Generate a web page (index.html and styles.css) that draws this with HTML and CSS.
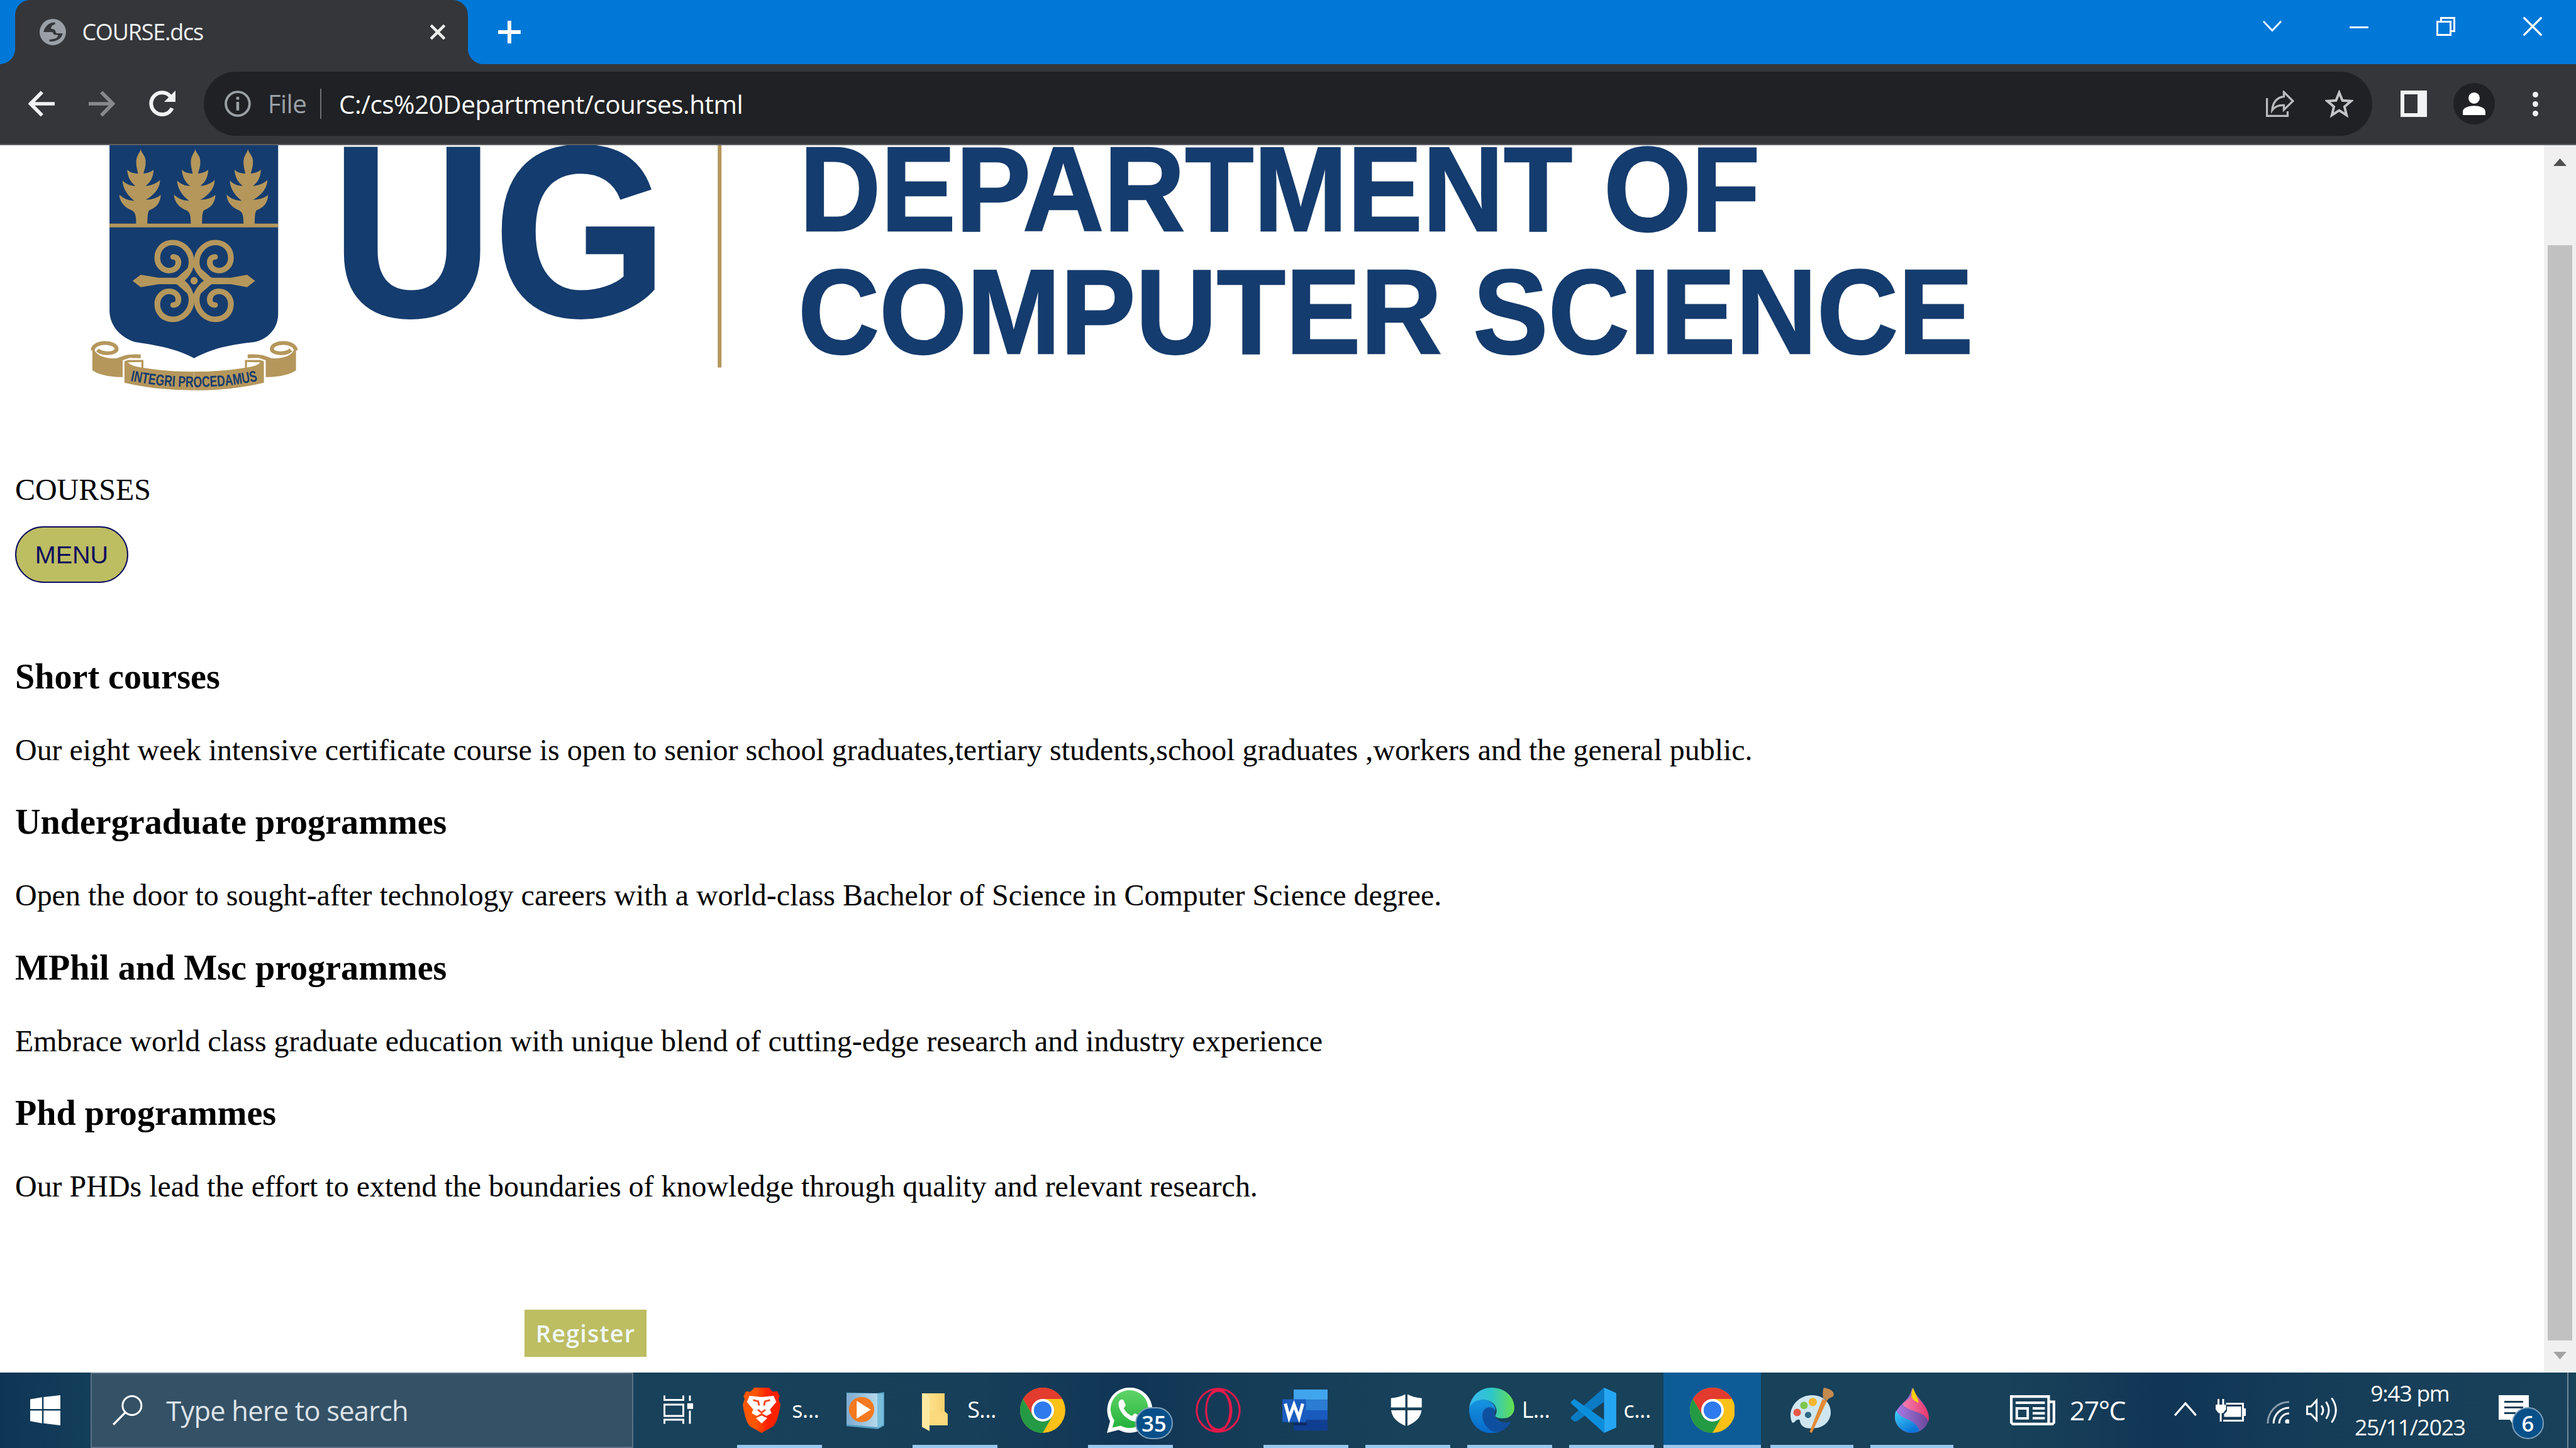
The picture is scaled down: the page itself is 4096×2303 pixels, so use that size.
FILE: index.html
```
<!DOCTYPE html>
<html lang="en">
<head>
<meta charset="utf-8">
<title>COURSE.dcs</title>
<link rel="stylesheet" href="styles.css">
</head>
<body>
<svg class="defs" aria-hidden="true">
  <defs>
    <linearGradient id="brave" x1="0" x2="1"><stop offset=".35" stop-color="#ff5601"/><stop offset=".65" stop-color="#ff2200"/></linearGradient>
    <linearGradient id="wa" x1="0" y1="0" x2="0" y2="1"><stop offset="0" stop-color="#5fd468"/><stop offset="1" stop-color="#25b23c"/></linearGradient>
    <linearGradient id="edgeTop" x1="0" x2="1"><stop offset="0" stop-color="#36b8f4"/><stop offset=".5" stop-color="#2fc6c8"/><stop offset="1" stop-color="#66e04f"/></linearGradient>
    <linearGradient id="edgeSide" x1="0" y1="0" x2="0" y2="1"><stop offset="0" stop-color="#1795e0"/><stop offset="1" stop-color="#0669cb"/></linearGradient>
    <linearGradient id="folder" x1="0" x2="1"><stop offset="0" stop-color="#ffe79a"/><stop offset="1" stop-color="#f6cf67"/></linearGradient>
    <linearGradient id="drop" x1="0" y1="0" x2=".6" y2="1"><stop offset="0" stop-color="#40d4f8"/><stop offset="1" stop-color="#0a74d8"/></linearGradient>
    <linearGradient id="dropMid" x1="0" x2="1"><stop offset="0" stop-color="#a87ce8"/><stop offset="1" stop-color="#6a479a"/></linearGradient>
    <linearGradient id="dropTop" x1="0" x2="1"><stop offset="0" stop-color="#f080b0"/><stop offset="1" stop-color="#e8386c"/></linearGradient>
    <linearGradient id="media" x1="0" x2="1"><stop offset="0" stop-color="#7fabd0"/><stop offset="1" stop-color="#b4d9ec"/></linearGradient>
    <symbol id="chrome" viewBox="0 0 24 24">
      <circle cx="12" cy="12" r="12" fill="#fbc116"/>
      <path d="M12 12 6.8 15 1.6 6A12 12 0 0 1 22.4 6H12Z" fill="#e33b2e"/>
      <path d="M1.6 6A12 12 0 0 0 12 24L17.2 15 12 12 6.8 15Z" fill="#249a44"/>
      <circle cx="12" cy="12" r="6" fill="#fff"/><circle cx="12" cy="12" r="4.7" fill="#2f7bee"/>
    </symbol>
    <path id="leafstalk" d="M-4 72C-4 95-28 110-28 150C-28 180-20 200-18 218C-45 218-65 210-78 195C-76 235-60 270-32 290C-65 290-90 275-104 258C-103 310-70 350-38 378C-75 375-105 360-122 340C-120 390-85 420-55 432C-35 442-28 455-28 515L34 515C34 455 38 440 45 432C80 420 108 390 108 342C90 362 55 370 25 372C60 350 105 310 104 255C85 275 55 288 25 290C50 270 68 240 68 195C55 210 35 215 12 218C18 190 26 180 24 140C22 110-2 95-4 72Z"/>
    <path id="curl" fill="none" stroke-width="32" stroke-linecap="round" d="M610 846H690C745 838 782 790 782 735C780 668 730 622 678 622C625 622 592 662 592 712C592 755 622 786 658 786C690 786 709 764 709 738C709 718 698 706 680 706"/>
    <g id="scroll">
      <path d="M232 1240V1370C260 1395 330 1412 400 1410V1312L440 1298 500 1300V1278C440 1272 400 1284 370 1300C310 1304 250 1288 240 1240Z"/>
      <path fill="none" stroke-width="22" d="M260 1252C290 1280 368 1274 366 1244C362 1200 236 1196 234 1254"/>
      <path fill-rule="evenodd" d="M410 1318 430 1310H515V1356Q660 1380 796 1378V1488Q590 1488 410 1443ZM430 1324C445 1345 480 1350 504 1354V1322Z"/>
    </g>
  </defs>
</svg>

<header class="tabstrip">
  <div class="tab">
    <svg class="s14" viewBox="0 0 14 14"><circle cx="7" cy="7" r="7" fill="#9aa0a6"/><path d="M8.200 1.800C5.500 1.800 3 3.200 2 7H6.800L7.600 8.300 9.800 8.600C9.600 10 8.600 10.800 5.200 10.900V12C9 12.300 11.800 10.400 12.200 7.700H9.200C8.400 7.600 8.600 5.800 7.600 5.600L6 5.200C6.200 3.600 7 3.300 8.200 2.800Z" fill="#35363a"/></svg>
    <span class="tab-title">COURSE.dcs</span>
    <svg class="s8 tab-close" viewBox="0 0 8 8"><path d="M.4.4 7.6 7.6M7.6.4.4 7.6" stroke="#eee" stroke-width="1.5"/></svg>
  </div>
  <svg class="s12 new-tab" viewBox="0 0 12 12"><path d="M6 0V12M0 6H12" stroke="#fff" stroke-width="2"/></svg>
  <div class="win-controls">
    <span><svg class="s10" viewBox="0 0 10 10"><path d="M.3 2.3 5 7.2 9.7 2.3" fill="none" stroke="#e6f2fc"/></svg></span>
    <span><svg class="s10" viewBox="0 0 10 10"><path d="M0 5.5H10" stroke="#fff"/></svg></span>
    <span><svg class="s10" viewBox="0 0 10 10"><path d="M.5 2.5H7.5V9.5H.5ZM2.5 2.5V.5H9.5V7.5H7.5" fill="none" stroke="#fff"/></svg></span>
    <span><svg class="s10" viewBox="0 0 10 10"><path d="M.2.2 9.8 9.8M9.8.2.2 9.8" stroke="#fff" stroke-width="1.1"/></svg></span>
  </div>
</header>

<nav class="toolbar">
  <span class="tool"><svg class="s14" viewBox="0 0 14 14"><path d="M14 7H1.5M7.3.8 1.2 7 7.3 13.2" fill="none" stroke="#f1f3f4" stroke-width="1.9"/></svg></span>
  <span class="tool"><svg class="s14" viewBox="0 0 14 14"><path d="M0 7H12.5M6.7.8 12.8 7 6.7 13.2" fill="none" stroke="#88898c" stroke-width="1.9"/></svg></span>
  <span class="tool"><svg class="s14" viewBox="0 0 14 14"><path d="M12.2 9.3A5.8 5.8 0 1 1 11.4 3.2" fill="none" stroke="#f1f3f4" stroke-width="2"/><path d="M14 0V6H8Z" fill="#f1f3f4"/></svg></span>
  <div class="omnibox">
    <svg class="s14" viewBox="0 0 14 14"><circle cx="7" cy="7" r="6.3" fill="none" stroke="#9aa0a6" stroke-width="1.3"/><path d="M7 6V10.6M7 3.3V4.8" stroke="#9aa0a6" stroke-width="1.5"/></svg>
    <span class="scheme">File</span>
    <span class="url">C:/cs%20Department/courses.html</span>
    <svg class="share" viewBox="0 0 15 14"><path d="M.5 4V13.5H11.5V11M9.5 3.2V.8L14.3 5.6 9.5 10.2V7.8C6.5 7.6 4.6 8.6 3.3 10.4 3.6 6.6 5.6 3.6 9.5 3.2Z" fill="none" stroke="#b9bbbd" stroke-width="1.1"/></svg>
    <svg class="star" viewBox="0 0 15 15"><path d="M7.5 1.4 9.2 5.6 13.8 5.9 10.3 8.9 11.4 13.4 7.5 10.9 3.6 13.4 4.7 8.9 1.2 5.9 5.8 5.6Z" fill="none" stroke="#c3c5c7" stroke-width="1.3"/></svg>
  </div>
  <svg class="s14 panel" viewBox="0 0 14 14"><path d="M0 0H14V14H0ZM2 2V12H9V2Z" fill="#f1f3f4" fill-rule="evenodd"/></svg>
  <svg class="avatar" viewBox="0 0 22 22"><circle cx="11" cy="11" r="11" fill="#202124"/><circle cx="11" cy="8" r="3" fill="#fff"/><path d="M5 17V15.2C5 13 8.4 12.1 11 12.1S17 13 17 15.2V17Z" fill="#fff"/></svg>
  <svg class="dots" viewBox="0 0 3 13"><g fill="#f1f3f4"><circle cx="1.5" cy="1.5" r="1.5"/><circle cx="1.5" cy="6.5" r="1.5"/><circle cx="1.5" cy="11.5" r="1.5"/></g></svg>
</nav>

<div class="viewport">
  <main class="page">
    <svg class="banner" viewBox="0 77 1100 140">
      <g transform="translate(26.78 72.31) scale(.09565 .09053)">
        <path fill="#153c6e" d="M327 40H1262V1040C1262 1130 1200 1190 1130 1205C1000 1220 900 1240 796 1300C690 1240 590 1225 470 1205C390 1180 327 1110 327 1020Z"/>
        <g fill="#b5975c">
          <use href="#leafstalk" x="503"/><use href="#leafstalk" x="806"/><use href="#leafstalk" x="1098"/>
          <rect x="327" y="511" width="935" height="22"/>
          <path d="M455 847 500 811 600 828H700L796 740 892 828H1000L1090 811 1134 847 1090 883 1000 866H892L796 954 700 866H600L500 883Z"/>
        </g>
        <g stroke="#b5975c">
          <use href="#curl"/>
          <use href="#curl" transform="translate(1592 0) scale(-1 1)"/>
          <use href="#curl" transform="translate(0 1694) scale(1 -1)"/>
          <use href="#curl" transform="translate(1592 1694) scale(-1 -1)"/>
        </g>
        <path fill="#153c6e" d="M744 845Q778 815 793 766Q812 815 850 845Q812 875 793 924Q778 875 744 845Z"/>
        <ellipse cx="796" cy="846" rx="20" ry="22" fill="#b5975c"/>
        <g fill="#b5975c" stroke="#b5975c" stroke-width="0">
          <use href="#scroll"/>
          <use href="#scroll" transform="translate(1593 0) scale(-1 1)"/>
        </g>
        <path id="motto" fill="none" d="M442 1432Q796 1506 1155 1432"/>
        <text class="motto" fill="#153c6e" font-size="90"><textPath href="#motto" textLength="712" lengthAdjust="spacingAndGlyphs">INTEGRI PROCEDAMUS</textPath></text>
      </g>
      <g class="wordmark" fill="#153c6e" stroke="#153c6e">
        <text x="175.6" y="167.7" font-size="130" stroke-width=".8" textLength="178.5" lengthAdjust="spacingAndGlyphs">UG</text>
        <text x="424" y="122.3" font-size="64" stroke-width=".8" textLength="509.3" lengthAdjust="spacingAndGlyphs">DEPARTMENT OF</text>
        <text x="423.2" y="187.4" font-size="64" stroke-width=".8" textLength="623.2" lengthAdjust="spacingAndGlyphs">COMPUTER SCIENCE</text>
      </g>
      <rect x="380.6" y="77" width="2" height="117.9" fill="#b5975c"/>
    </svg>
    <p class="label">COURSES</p>
    <button class="menu">MENU</button>
    <section class="courses">
      <h3>Short courses</h3>
      <p>Our eight week intensive certificate course is open to senior school graduates,tertiary students,school graduates ,workers and the general public.</p>
      <h3>Undergraduate programmes</h3>
      <p>Open the door to sought-after technology careers with a world-class Bachelor of Science in Computer Science degree.</p>
      <h3>MPhil and Msc programmes</h3>
      <p>Embrace world class graduate education with unique blend of cutting-edge research and industry experience</p>
      <h3>Phd programmes</h3>
      <p>Our PHDs lead the effort to extend the boundaries of knowledge through quality and relevant research.</p>
    </section>
    <button class="register">Register</button>
  </main>
  <aside class="scrollbar">
    <svg class="arrow" viewBox="0 0 7 4"><path d="M3.5 0 7 4H0Z" fill="#505050"/></svg>
    <div class="thumb"></div>
    <svg class="arrow" viewBox="0 0 7 4"><path d="M0 0H7L3.5 4Z" fill="#a3a3a3"/></svg>
  </aside>
</div>

<footer class="taskbar">
  <div class="start"><svg class="s16" viewBox="0 0 16 16"><path d="M0 2.2 6.3 1.1V7.3H0ZM7.1 1 16 0V7.3H7.1ZM0 8.2H6.3V14.9L0 13.8ZM7.1 8.2H16V16L7.1 14.9Z" fill="#fff"/></svg></div>
  <div class="search">
    <svg class="s16" viewBox="0 0 16 16"><circle cx="10.3" cy="5.5" r="5" fill="none" stroke="#fff"/><path d="M6.7 9.2.4 15.6" stroke="#fff" stroke-width="1.1"/></svg>
    <span>Type here to search</span>
  </div>
  <div class="taskview"><svg class="s16" viewBox="0 0 16 16"><path d="M.5.2V2.5H10.5V.2M.5 5H10.5V11H.5ZM.5 15.2V13H10.5V15.2M14 .2V3M14 8.2V15.2" fill="none" stroke="#fff"/><path d="M12.6 4.3H15.7V7.3H12.6Z" fill="#fff"/></svg></div>
  <div class="task open brave">
    <svg class="brave-icon" viewBox="0 0 20 24"><path d="M6 0H14L15.8 2.2 18.3 2 19.6 4.5 19 6 20 9C19 15 18 18.5 16.2 20.5L10 24 3.8 20.5C2 18.5 1 15 0 9L1 6 .4 4.5 1.7 2 4.2 2.2Z" fill="url(#brave)"/><path d="M3.6 4.3 10 5 16.4 4.3 17.8 7.6 14.5 11.5 15.2 13.6 12.6 15 10 13.6 7.4 15 4.8 13.6 5.5 11.5 2.2 7.6ZM7 16.2 10 14.8 13 16.2 10 19Z" fill="#fff"/><path d="M5.5 6.6 8.2 7.3 8.7 9.5M14.5 6.6 11.8 7.3 11.3 9.5M8 11.7 10 13.2 12 11.7" fill="none" stroke="#ff4a20"/></svg>
    <span>s...</span>
  </div>
  <div class="task media"><svg class="s20" viewBox="0 0 20 20"><path d="M16 1 20 .3V18.2L16.6 20 0 18.4V.6Z" fill="#4f9cc0"/><path d="M0 1H16.5V19L0 17.6Z" fill="url(#media)"/><path d="M16.5 1.2H19.6V17.8L16.5 19.4Z" fill="#78bddb"/><circle cx="8" cy="9.6" r="6.7" fill="#f37a20"/><path d="M5.4 5 12.8 9.7 5.4 14.4Z" fill="#fff"/></svg></div>
  <div class="task open files"><svg class="folder-icon" viewBox="0 0 14 20"><path d="M0 0H12V9.5L13.6 11V17H4V20L0 17.8Z" fill="url(#folder)"/><path d="M0 .3C3 .6 4 2 4 4V20L0 17.8Z" fill="#ffe9a2"/><path d="M4 9V17H13.6V11L12 9.8Z" fill="#fada7c"/></svg><span>S...</span></div>
  <div class="task chrome"><svg class="s24"><use href="#chrome"/></svg></div>
  <div class="task open whatsapp"><svg class="s24" viewBox="0 0 24 24"><path d="M0 24 1.7 17.8A12 12 0 1 1 6.3 22.4Z" fill="#fff"/><path d="M2.9 21.2 4 17.4A10 10 0 1 1 7.3 20.2Z" fill="url(#wa)"/><path d="M6.2 8C6.7 6 8.5 5.8 9 7L10 9.4 8.9 11C10 13 11.5 14.3 13.3 15L14.8 13.6 18 15.3C17.5 18 15.4 18.4 13.8 17.8 9.3 16.2 6 12 6.2 8Z" fill="#fff"/></svg><b class="badge">35</b></div>
  <div class="task opera"><svg class="s24" viewBox="0 0 24 24"><g fill="none" stroke="#e6194b"><circle cx="12" cy="12" r="11.4"/><ellipse cx="12" cy="12" rx="6.4" ry="11"/><path d="M7.5 4.5C12-1.5 19 3 19 12S12 25.500 7.5 19.500"/></g></svg></div>
  <div class="task open word"><svg class="word-icon" viewBox="0 0 24 22"><path d="M6 0H24V5.500H6Z" fill="#41a5ee"/><path d="M6 5.500H24V11H6Z" fill="#2b7cd3"/><path d="M6 11H24V16.200H6Z" fill="#185abd"/><path d="M6 16.200H24V21.800H6Z" fill="#103f91"/><path d="M6 17.500H13V19H6Z" fill="#0b2a63"/><path d="M0 5.200H12.500V17.300H0Z" fill="#1a5cbe"/><path d="M1.600 7.500 3.600 15 6.200 8 8.800 15 10.800 7.500" fill="none" stroke="#fff" stroke-width="1.700"/></svg></div>
  <div class="task open shield"><svg class="shield-icon" viewBox="0 0 18 18"><path d="M8.400.300V7.500H.600V2.400C3.500 2.300 6 1.500 8.400.300ZM9.600.300C12 1.500 14.500 2.300 17.400 2.400V7.500H9.600ZM.700 9H8.400V17.500C3.500 15.200 1.300 13 .700 9ZM9.600 9H17.300C16.700 13 14.500 15.200 9.600 17.500Z" fill="#fff"/></svg></div>
  <div class="task open edge"><svg class="s24" viewBox="0 0 24 24"><path d="M0 11C1 4 6 0 12 0 19 0 24 5 24 10.500 24 14 21.500 16.300 18 16.300 15 16.300 13.500 15.500 14 14.500 16 11.500 13 6.500 8 6.500 4 6.500 1 8.500 0 11Z" fill="url(#edgeTop)"/><path d="M0 11.500C.500 8 4 6.200 8 6.400 12 6.600 14.500 10 13.800 12.500 13 10 9 9.500 7.500 13 6 18 10 23 16.500 23.200 8 26.500 0 20.500 0 11.500Z" fill="url(#edgeSide)"/><path d="M7.300 13C8.500 9.500 12.500 10 13.700 12.300 12.500 17 18 19.500 22 18 21 21 17.500 23.800 14 23.500 9.500 22.500 6.300 18 7.300 13Z" fill="#0f4fa0"/></svg><span>L...</span></div>
  <div class="task open code"><svg class="s24" viewBox="0 0 24 24"><path d="M17.500 0V7.500L3.300 17.800 1.800 18 0 16.600V15.500Z" fill="#0a7bc4"/><path d="M1.800 6 17.500 17V24L0 8.300V7.400Z" fill="#0b8fdc"/><path d="M17.500 0 24 2.800V21.200L17.500 24Z" fill="#25a6f2"/></svg><span>c...</span></div>
  <div class="task active"><svg class="s24"><use href="#chrome"/></svg></div>
  <div class="task open paint"><svg class="s24" viewBox="0 0 24 24"><path d="M12 4C18 4 22 8 22 13S18 21.500 13 21.500C8 22 6 20.500 5.500 17 3 16.500 3.500 19 1.500 18.500-1.500 12 4 4 12 4Z" fill="#cfe6f1"/><circle cx="12.500" cy="7.600" r="2.200" fill="#f5b52c"/><circle cx="7.800" cy="9.400" r="2" fill="#7cc64c"/><circle cx="4.200" cy="13.200" r="2" fill="#e85743"/><circle cx="10" cy="14.500" r="1.700" fill="#2c6684"/><path d="M17.600 6 20 7 12 24 10.800 23.500Z" fill="#e28a35"/><path d="M18 5.500C17.500 3 18 1 18.300 0 21.500.500 24 2 23.600 4 23 5.500 21 5 20 7Z" fill="#c48a4e"/></svg></div>
  <div class="task open drop"><svg class="drop-icon" viewBox="0 0 18 24"><path d="M9 0C11 5 18 9 18 16A9 8.500 0 0 1 9 24A9 8.500 0 0 1 0 16C0 9 8 8 9 0Z" fill="url(#dropMid)"/><path d="M.600 12C3 17.500 11 16 13 23A9 8.500 0 0 1 0 16C0 14.500.200 13 .600 12Z" fill="url(#drop)"/><path d="M4 8.500C6 13 16 12 17.800 18 19 11 13 7 9.500 2 9 5 6 7 4 8.500Z" fill="url(#dropTop)"/><path d="M9.700 0C10.500 3 12.500 5 12.500 8 9.500 7 7.500 4.500 9.700 0Z" fill="#fccc10"/></svg></div>

  <div class="tray">
    <svg class="news" viewBox="0 0 24 16"><path d="M.700.700H20.500V15.300H1.500L.700 14.500ZM20.500 3.500H23.300V14.500L22.500 15.300H20.500" fill="none" stroke="#fff" stroke-width="1.400"/><path d="M3 4H18.500M12 7H18.500M12 9.600H18.500M12 12.200H18.500" stroke="#fff" stroke-width="1.300"/><path d="M3.600 7H9.400V12.300H3.600Z" fill="none" stroke="#fff" stroke-width="1.300"/></svg>
    <span class="temp">27°C</span>
    <svg class="chev" viewBox="0 0 12 8"><path d="M.400 7.400 6 1 11.600 7.400" fill="none" stroke="#fff" stroke-width="1.100"/></svg>
    <svg class="battery" viewBox="0 0 16 12"><path d="M4 11.500H14.500V2.500H5.500M15.500 5V9" fill="none" stroke="#fff"/><path d="M6 4H13.500V9.500H4.500V8L6 6.500Z" fill="#fff"/><path d="M1.500 0V3M4 0V3M2.700 7V12" stroke="#fff"/><path d="M0 3H5.500V5.500L4 7.500H1.500L0 5.500Z" fill="#fff"/></svg>
    <svg class="wifi" viewBox="0 0 12 12"><circle cx="11" cy="11" r="1.200" fill="#fff"/><g fill="none" stroke="#fff"><path d="M6.700 12A5.300 5.300 0 0 1 12 6.700M3.700 12A8.300 8.300 0 0 1 12 3.700"/><path d="M.600 12A11.400 11.400 0 0 1 12 .600" opacity=".5"/></g></svg>
    <svg class="volume" viewBox="0 0 17 14"><path d="M.500 5H2.500L5.500 1.800V12.200L2.500 9H.500Z" fill="none" stroke="#fff"/><path d="M8 4.500Q10 7 8 9.500M10.500 2.500Q13.500 7 10.500 11.500M13.500.500Q18 7 13.500 13.500" fill="none" stroke="#fff"/></svg>
    <div class="clock"><span>9:43 pm</span><span class="date">25/11/2023</span></div>
    <div class="notify"><svg class="s16" viewBox="0 0 16 16"><path d="M0 0H16V13H10L7.500 15.500 6 13H0Z" fill="#fff"/><path d="M3 3.500H13M3 6.500H13M3 9.500H9" stroke="#183f59"/></svg><b class="badge">6</b></div>
  </div>
</footer>
</body>
</html>
```
FILE: styles.css
```
/* 1rem = 10 units of the 1366 x 768 desktop */
html { font-size: 29.985px; }
* { box-sizing: border-box; }
body {
  margin: 0;
  width: 100vw;
  height: 100vh;
  overflow: hidden;
  display: grid;
  grid-template-rows: 3.4rem 4.3rem 65.1rem 1fr;
  background: #fff;
  font-family: "Open Sans", "Noto Sans", sans-serif;
}
svg { display: block; flex: none; }
.defs { position: absolute; width: 0; height: 0; }
.s8 { width: .8rem; height: .8rem; }
.s10 { width: 1rem; height: 1rem; }
.s12 { width: 1.2rem; height: 1.2rem; }
.s14 { width: 1.4rem; height: 1.4rem; }
.s16 { width: 1.6rem; height: 1.6rem; }
.s20 { width: 2rem; height: 2rem; }
.s24 { width: 2.4rem; height: 2.4rem; }

/* tab strip */
.tabstrip { display: flex; background: #0078d8; }
.tab {
  position: relative;
  width: 24rem;
  margin-left: .8rem;
  padding: 0 1.2rem 0 1.3rem;
  display: flex;
  align-items: center;
  background: #35363a;
  border-radius: .8rem .8rem 0 0;
}
.tab::before, .tab::after {
  content: "";
  position: absolute;
  bottom: 0;
  width: .8rem;
  height: .8rem;
}
.tab::before { left: -.8rem; background: radial-gradient(circle at 0 0, transparent .79rem, #35363a .8rem); }
.tab::after { right: -.8rem; background: radial-gradient(circle at 100% 0, transparent .79rem, #35363a .8rem); }
.tab-title { margin-left: .85rem; font-size: 1.2rem; letter-spacing: -.04rem; line-height: 1.6rem; color: #f1f3f4; }
.tab-close { margin-left: auto; }
.new-tab { margin: 1.1rem 0 0 1.6rem; }
.win-controls { margin-left: auto; display: flex; height: 2.8rem; }
.win-controls span { width: 4.6rem; display: flex; align-items: center; justify-content: center; }

/* toolbar */
.toolbar {
  display: flex;
  align-items: center;
  padding-left: .6rem;
  background: #35363a;
  border-bottom: .1rem solid #5f6064;
}
.tool { width: 3.2rem; display: flex; justify-content: center; }
.omnibox {
  width: 115rem;
  height: 3.4rem;
  margin-left: .6rem;
  padding: 0 1rem 0 1.1rem;
  display: flex;
  align-items: center;
  border-radius: 1.7rem;
  background: #202124;
  font-size: 1.35rem;
}
.scheme {
  width: 2.85rem;
  margin-left: .9rem;
  line-height: 1.6rem;
  letter-spacing: -.02rem;
  color: #9aa0a6;
  border-right: .1rem solid #6b6e72;
}
.url { margin-left: .93rem; letter-spacing: -.017rem; color: #fff; }
.share { width: 1.5rem; height: 1.4rem; margin-left: auto; }
.star { width: 1.5rem; height: 1.5rem; margin-left: 1.65rem; }
.panel { margin-left: 1.5rem; }
.avatar { width: 2.2rem; height: 2.2rem; margin-left: 1.4rem; }
.dots { width: .3rem; height: 1.3rem; margin-left: 2rem; }

/* page */
.viewport { display: flex; min-height: 0; background: #fff; }
.page {
  flex: 1;
  display: flex;
  flex-direction: column;
  align-items: flex-start;
  font: 1.6rem/1.8rem "Liberation Serif", "Times New Roman", serif;
  color: #000;
}
.banner { width: 110rem; height: 14rem; }
.wordmark, .motto { font-family: "Liberation Sans", Arial, sans-serif; font-weight: 700; }
.label { margin: 3.39rem 0 0 .8rem; }
.menu {
  width: 6rem;
  height: 3rem;
  margin: 1.04rem 0 0 .8rem;
  padding: 0;
  border: .1rem solid #0b0b5e;
  border-radius: 1.5rem;
  background: #bdbd62;
  color: #0b0b5e;
  font: 1.32rem "Liberation Sans", Arial, sans-serif;
}
.courses { margin: 3.89rem 0 0 .8rem; }
.courses h3 { margin: 0 0 1.86rem; font-size: 1.872rem; line-height: 2.2rem; }
.courses p { margin: 0 0 1.86rem; }
.courses p:last-child { margin-bottom: 0; }
.register {
  width: 6.5rem;
  height: 2.5rem;
  margin: 5.62rem 0 0 27.8rem;
  padding: 0;
  border: 0;
  background: #bdbd62;
  color: #f0f8ff;
  font: 600 1.26rem "Open Sans", sans-serif;
  letter-spacing: .04rem;
}
.scrollbar {
  width: 1.7rem;
  padding: .7rem 0;
  display: flex;
  flex-direction: column;
  align-items: center;
  background: #f0f0f0;
}
.arrow { width: .7rem; height: .4rem; }
.thumb { width: 1.3rem; height: 58.1rem; margin: 4.2rem 0 .6rem; background: #c1c1c1; }

/* taskbar */
.taskbar {
  display: grid;
  grid-template-columns: 4.8rem 28.8rem 5.5rem 4.5rem 4.8rem 4.5rem 4.8rem 4.5rem 4.8rem 5.4rem 5.4rem 5.4rem 5rem 5.7rem 5.3rem 4.4rem 1fr;
  background: linear-gradient(90deg, #0f3556 0, #14405a 4%, #18415a 27%, #173f59 38%, #103556 44%, #153c57 48%, #18415a 55%, #18415a 78%, #173e58 80%, #103556 84%, #153d58 90%, #183f59 94%, #18415a 100%);
  color: #fff;
}
.start, .search, .taskview { display: flex; align-items: center; }
.start { padding-left: 1.6rem; }
.search {
  padding-left: 1.1rem;
  border: .1rem solid #5c7186;
  background: #345166;
  color: #dde3e8;
  font-size: 1.45rem;
  letter-spacing: -.027rem;
}
.search span { margin: .06rem 0 0 1.25rem; }
.taskview { padding-left: 1.6rem; }
.task {
  position: relative;
  display: flex;
  align-items: center;
  width: 4.5rem;
  border-bottom: .2rem solid transparent;
  padding-top: .2rem;
  font-size: 1.2rem;
  letter-spacing: -.02rem;
}
.task span { line-height: 1.6rem; margin-bottom: .1rem; }
.open { border-bottom-color: #99c8ee; }
.brave { padding-left: .3rem; gap: .6rem; }
.brave-icon { width: 2rem; height: 2.4rem; }
.media { padding-left: 1.3rem; }
.files { padding-left: .5rem; gap: 1rem; }
.folder-icon { width: 1.4rem; height: 2rem; margin-top: .2rem; }
.chrome, .opera { padding-left: 1.2rem; }
.whatsapp { padding-left: 1rem; }
.word { padding-left: 1rem; }
.word-icon { width: 2.4rem; height: 2.2rem; }
.shield { padding-left: 1.3rem; }
.shield-icon { width: 1.75rem; height: 1.8rem; }
.edge { padding-left: .1rem; gap: .4rem; }
.code { padding-left: .1rem; gap: .4rem; }
.active { width: 5.2rem; padding-left: 1.4rem; background: #0d5c98; border-bottom-color: #99c8ee; }
.paint { width: 4.4rem; padding-left: 1rem; }
.drop { width: 4.4rem; padding-left: 1.3rem; }
.drop-icon { width: 1.8rem; height: 2.4rem; }
.badge {
  position: absolute;
  display: flex;
  align-items: center;
  justify-content: center;
  height: 1.7rem;
  border: .1rem solid #7f9fb8;
  border-radius: 1rem;
  background: #07508a;
  font-size: 1.15rem;
  font-weight: 600;
  line-height: 1;
  letter-spacing: 0;
}
.whatsapp .badge { left: 2.5rem; top: 1.85rem; width: 2rem; }

.tray {
  display: flex;
  align-items: center;
  margin-right: .4rem;
  padding-left: 3rem;
  border-right: .1rem solid #6f8797;
}
.news { width: 2.4rem; height: 1.6rem; }
.temp { width: 3.1rem; margin-left: .75rem; font-size: 1.43rem; letter-spacing: -.05rem; }
.chev { width: 1.2rem; height: .8rem; margin: 0 0 .1rem 2.45rem; }
.battery { width: 1.6rem; height: 1.2rem; margin-left: 1rem; }
.wifi { width: 1.2rem; height: 1.2rem; margin: .2rem 0 0 1.1rem; }
.volume { width: 1.7rem; height: 1.4rem; margin-left: .9rem; }
.clock {
  width: 6rem;
  margin-left: .8rem;
  display: flex;
  flex-direction: column;
  align-items: center;
  font-size: 1.18rem;
  line-height: 1.8rem;
  letter-spacing: -.04rem;
}
.notify { position: relative; margin-left: 1.7rem; }
.notify .badge { left: .7rem; top: .65rem; width: 1.7rem; }
```
